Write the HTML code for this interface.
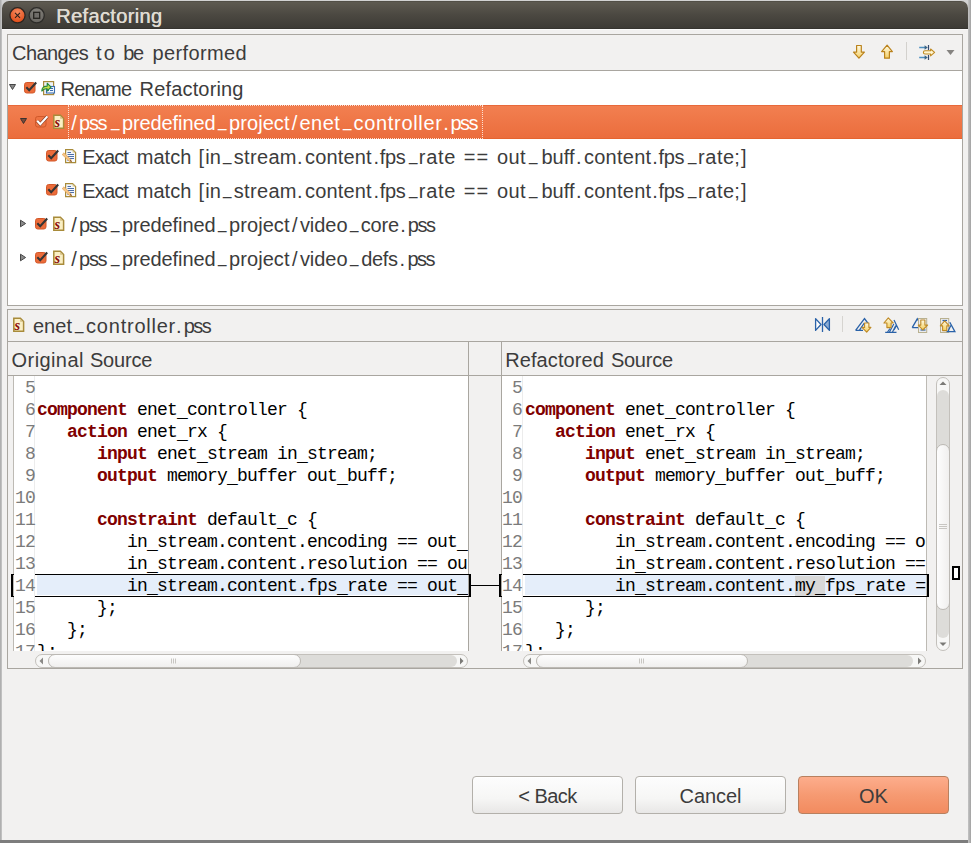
<!DOCTYPE html>
<html><head><meta charset="utf-8">
<style>
*{margin:0;padding:0;box-sizing:border-box}
html,body{width:971px;height:843px;overflow:hidden;position:relative}
body{font-family:"Liberation Sans",sans-serif;color:#3c3c3c;background:#d6d6d6}
.a{position:absolute}
svg{position:absolute;overflow:visible}
.ui{position:absolute;font-size:20px;line-height:22px;white-space:nowrap;color:#3c3c3c}
.ln,.cd{position:absolute;font-family:"Liberation Mono",monospace;font-size:18px;letter-spacing:-0.8px;line-height:22px;white-space:pre}
.ln{color:#7b7b7b;text-align:right}
.cd{color:#000}
.cd b{color:#7f0000;font-weight:bold}
.cd i{font-style:normal;background:#d8d8d8}
.btn{position:absolute;border:1px solid #b3b0aa;border-radius:4px;background:linear-gradient(#fdfdfd,#f6f6f5 60%,#e8e7e6);box-shadow:inset 0 1px 0 #fff}
.btn span{position:absolute;left:0;right:0;top:8px;text-align:center;font-size:20px;line-height:22px;color:#3c3c3c}
.hs{position:absolute;height:14px;border:1px solid #c9c6c1;border-radius:7px;background:#e3e2e0}
.thumb{position:absolute;border:1px solid #c2bfba;background:linear-gradient(#fefefe,#f2f1f0 55%,#e6e5e3)}
.ui u{text-decoration:none;position:relative;top:-4px;display:inline-block;transform:scaleX(0.76);transform-origin:0 0}
.cd u{text-decoration:none;position:relative;top:2px}

</style></head><body>
<!-- backdrop -->
<div class="a" style="left:0;top:0;width:971px;height:843px;background:#d2d2d2"></div>
<div class="a" style="left:0;top:0;width:2px;height:843px;background:linear-gradient(90deg,#a8a8a8,#c8c8c8)"></div>
<div class="a" style="left:0;top:840px;width:971px;height:3px;background:#7d7d7d"></div>
<div class="a" style="left:968px;top:0;width:3px;height:843px;background:linear-gradient(90deg,#c4c4c4,#a2a2a2)"></div>

<!-- window -->
<div class="a" style="left:2px;top:1px;width:966px;height:839px;background:#f2f1f0;border-radius:7px 7px 0 0;overflow:hidden">
  <div class="a" style="left:0;top:0;width:966px;height:28px;background:linear-gradient(#4d4a42 0,#5d5950 1.5px,#4b4841 50%,#3d3b36 27px,#2e2d29 28px)"></div>
  <div class="a" style="left:0;top:28px;width:966px;height:1px;background:#fbfbfb"></div>
</div>
<!-- title buttons -->
<svg style="left:0;top:0" width="60" height="30">
  <defs>
    <radialGradient id="cg" cx="50%" cy="30%" r="70%"><stop offset="0" stop-color="#f68a5f"/><stop offset="1" stop-color="#df4a15"/></radialGradient>
    <radialGradient id="mg" cx="50%" cy="30%" r="70%"><stop offset="0" stop-color="#87857f"/><stop offset="1" stop-color="#66645f"/></radialGradient>
  </defs>
  <circle cx="17.5" cy="15.3" r="7.6" fill="url(#cg)" stroke="#2b2521" stroke-width="1.3"/>
  <path d="M15 12.8 L20 17.8 M20 12.8 L15 17.8" stroke="#2e211b" stroke-width="1.1"/>
  <circle cx="36.7" cy="15.3" r="7.6" fill="url(#mg)" stroke="#2d2c29" stroke-width="1.3"/>
  <rect x="33.7" y="12.3" width="6" height="6" fill="#6f6d69" stroke="#25241f" stroke-width="1.3"/>
</svg>
<div class="ui" style="left:56px;top:5px;color:#dfdbd2;font-size:20px;letter-spacing:0.35px;text-shadow:0.6px 0 0 #dfdbd2">Refactoring</div>

<!-- ================= changes group ================= -->
<div class="a" style="left:7px;top:34px;width:956px;height:272px;background:#fff;border:1px solid #a9a6a0"></div>
<div class="a" style="left:8px;top:35px;width:954px;height:36px;background:#f2f1f0;border-bottom:1px solid #a9a6a0"></div>

<!-- toolbar icons -->
<svg style="left:850px;top:42px" width="110" height="22">
  <defs>
    <linearGradient id="ag" x1="0" y1="0" x2="0" y2="1"><stop offset="0" stop-color="#fffbe6"/><stop offset="1" stop-color="#f5d066"/></linearGradient>
    <linearGradient id="ag2" x1="0" y1="0" x2="1" y2="0"><stop offset="0" stop-color="#fff6c8"/><stop offset="1" stop-color="#f2c23a"/></linearGradient>
  </defs>
  <!-- down arrow: x 853-865 y45-59 -->
  <path d="M6.6 3.5 H11.3 V10.1 H14.4 L8.95 16.2 L3.5 10.1 H6.6 Z" fill="url(#ag)" stroke="#ba821c" stroke-width="1.2" stroke-linejoin="round"/>
  <!-- up arrow: x 881-893 y44-59 -->
  <path d="M34.6 16.2 H39.4 V9.6 H42.4 L37.1 3.2 L31.6 9.6 H34.6 Z" fill="url(#ag)" stroke="#ba821c" stroke-width="1.2" stroke-linejoin="round"/>
  <rect x="56" y="0" width="1" height="18" fill="#d3d1cd"/>
  <!-- layout icon x919-935 -->
  <path d="M69.2 5.5 H75.5 M69.2 15.5 H75.5" stroke="#4d8fc0" stroke-width="1.3"/>
  <path d="M74.6 3.2 L77.8 5.5 L74.6 7.8 Z M74.6 13.2 L77.8 15.5 L74.6 17.8 Z" fill="#3d6585"/>
  <path d="M78.5 3 V8 M78.5 13 V18" stroke="#35496e" stroke-width="1.2"/>
  <path d="M75 8.8 H80.6 V7 L84.6 10.4 L80.6 13.8 V12 H75 A1.6 1.6 0 0 1 75 8.8 Z" fill="#fff6d2" stroke="#c08a22" stroke-width="1.1" stroke-linejoin="round"/>
  <path d="M96.5 8 H104.5 L100.5 13 Z" fill="#858380"/>
</svg>

<!-- tree -->
<div class="a" style="left:8px;top:105px;width:954px;height:34px;background:linear-gradient(#f27f50,#eb6d3d);border-top:1px solid #e8693a;border-bottom:1px solid #e5642f"></div>
<div class="a" style="left:68px;top:105px;width:415px;height:34px;border:1px dotted #fde0d2"></div>

<svg style="left:0;top:0" width="80" height="300">
  <defs>
    <g id="chk">
      <rect x="0.5" y="0.5" width="10.5" height="10.5" rx="2.2" fill="#ec6c3a" stroke="#d35728" stroke-width="1"/>
      <path d="M2.3 5.2 L5.2 8.2 L12.2 0.5" fill="none" stroke="#353535" stroke-width="2.1"/>
    </g>
    <g id="chkw">
      <rect x="0.5" y="0.5" width="10.5" height="10.5" rx="2.2" fill="#ee7342" stroke="#d0582a" stroke-width="1"/>
      <path d="M2.2 4.8 L5.3 8.2 L12.4 0.4" fill="none" stroke="#6a3422" stroke-width="3.2" stroke-opacity="0.8"/><path d="M2.2 4.8 L5.3 8.2 L12.4 0.4" fill="none" stroke="#ffffff" stroke-width="2.1"/>
    </g>
    <g id="pss">
      <path d="M0.8 0.8 H7.4 L10.6 4 V13.8 H0.8 Z" fill="#fbefc4" stroke="#a88b3a" stroke-width="1.5"/>
      <path d="M7.2 1.2 V4.2 H10.2 Z" fill="#d3bf84"/>
      <text x="1.6" y="12.2" font-family="Liberation Serif" font-style="italic" font-weight="bold" font-size="14.5" fill="#8a0c0c">s</text>
    </g>
    <g id="match">
      <path d="M3.6 0.6 H10.6 L13.6 3.6 V13.6 H3.6 Z" fill="#f4f8fd" stroke="#a88b3a" stroke-width="1.2"/>
      <path d="M10.6 0.8 V3.6 H13.4 Z" fill="#d8c68e"/>
      <path d="M5.5 3.5 H9 M5.5 5.5 H12 M5.5 7.5 H12 M5.5 9.5 H12 M5.5 11.5 H9" stroke="#4e6fa8" stroke-width="1"/>
      <path d="M0.2 5.6 L2 3.8 L9 10.8 L9.6 12.8 L7.4 12.4 Z" fill="#f6c483" stroke="#e0a35a" stroke-width="0.7"/>
      <path d="M8 11.4 L9.6 12.8" stroke="#5a3a20" stroke-width="1"/>
    </g>
    <path id="tri" d="M0 0 H7 L3.5 6 Z"/>
  </defs>
  <!-- row 1 -->
  <path d="M9.5 84.5 H15.5 L12.5 89.5 Z" fill="#8a8a8a" stroke="#474747" stroke-width="1" stroke-linejoin="round"/>
  <use href="#chk" x="24" y="82"/>
  <g transform="translate(41,81)">
    <rect x="2.6" y="0.6" width="10" height="13" fill="#eef3fa" stroke="#a88a3c" stroke-width="1.2"/>
    <rect x="5.5" y="5.5" width="8" height="6.5" fill="#f4f8fd" stroke="#3b6db0" stroke-width="1.1"/>
    <path d="M9 7.5 H12 M9 9.5 H12 M7 9.5 H8" stroke="#3b6db0" stroke-width="1"/>
    <path transform="translate(0,-0.8)" d="M0.8 10.8 C0.8 7.6 2.6 5.9 6.2 5.9 V3 L10 6.9 L6.2 10.8 V8.6 C4 8.4 2.3 9.2 0.8 10.8 Z" fill="#c4dd4c" stroke="#25893a" stroke-width="1.1" stroke-linejoin="round"/>
  </g>
  <!-- row 2 selected -->
  <path d="M20.5 118.5 H26.5 L23.5 123.5 Z" fill="#7a4a38" stroke="#3a3230" stroke-width="1" stroke-linejoin="round"/>
  <use href="#chkw" x="35" y="116"/>
  <use href="#pss" x="53" y="114.5"/>
  <!-- row 3,4 -->
  <use href="#chk" x="46" y="150"/>
  <use href="#match" x="62" y="149"/>
  <use href="#chk" x="46" y="184"/>
  <use href="#match" x="62" y="183"/>
  <!-- row 5,6 -->
  <path d="M20.5 220.2 L25.6 223.5 L20.5 226.8 Z" fill="#8a8a8a" stroke="#474747" stroke-width="1" stroke-linejoin="round"/>
  <use href="#chk" x="35" y="218"/>
  <use href="#pss" x="53" y="216.5"/>
  <path d="M20.5 254.2 L25.6 257.5 L20.5 260.8 Z" fill="#8a8a8a" stroke="#474747" stroke-width="1" stroke-linejoin="round"/>
  <use href="#chk" x="35" y="252"/>
  <use href="#pss" x="53" y="250.5"/>
</svg>


<!-- ================= compare group ================= -->
<div class="a" style="left:7px;top:309px;width:956px;height:360px;background:#f2f1f0;border:1px solid #a9a6a0"></div>
<svg style="left:0;top:0" width="60" height="340">
  <use href="#pss" x="13" y="317.5"/>
</svg>

<svg style="left:800px;top:310px" width="170" height="30">
  <defs>
    <linearGradient id="ag3" x1="0" y1="0" x2="0" y2="1"><stop offset="0" stop-color="#fffbe6"/><stop offset="1" stop-color="#f3cd5a"/></linearGradient>
  </defs>
  <!-- mirror -->
  <path d="M15.6 8.6 L21 14.5 L15.6 20.4 Z" fill="#fbfcfe" stroke="#2a62a8" stroke-width="1.3" stroke-linejoin="round"/>
  <path d="M22.5 7 V22" stroke="#2a62a8" stroke-width="1.3"/>
  <path d="M29.4 8.6 L24 14.5 L29.4 20.4 Z" fill="#8dadd4" stroke="#2a62a8" stroke-width="1.3" stroke-linejoin="round"/>
  <rect x="42" y="6" width="1" height="16" fill="#d6d4d0"/>
  <!-- icon 3 -->
  <path d="M55.6 20.4 L64.5 8.6 L68.5 14 M55.6 20.4 H63 M59.5 20.2 L64.3 13" fill="none" stroke="#2a62a8" stroke-width="1.3"/>
  <path d="M64.6 13 H68.9 V17.4 H70.9 L66.7 22.2 L62 17.4 H64.6 Z" fill="url(#ag3)" stroke="#bf8a26" stroke-width="1.1" stroke-linejoin="round"/>
  <!-- icon 4 -->
  <path d="M94 10 L98.7 19.8 M85.2 22.3 H96.5 M89.5 22 L93.8 14 M92.5 22 L95.8 15.5 M87.5 22 L90 18.5 M94 20 L96.3 16" fill="none" stroke="#2a62a8" stroke-width="1.2"/>
  <path d="M86.9 17.6 H91.1 V13 H93.2 L88.3 7.9 L83.9 13 H86.9 Z" fill="url(#ag3)" stroke="#bf8a26" stroke-width="1.1" stroke-linejoin="round"/>
  <!-- icon 5 -->
  <path d="M112.2 17.6 L117.3 8.8 L119 11.5 M112.2 17.6 H119" fill="none" stroke="#2a62a8" stroke-width="1.3"/>
  <rect x="118.5" y="8.5" width="8.2" height="14" fill="#eaebee" stroke="#b9b190" stroke-width="1"/>
  <path d="M120.5 20 H125.5" stroke="#2a62a8" stroke-width="1.2"/>
  <path d="M120.8 10 H124.9 V15.1 H127.6 L122.8 20 L118.3 15.1 H120.8 Z" fill="url(#ag3)" stroke="#bf8a26" stroke-width="1.1" stroke-linejoin="round"/>
  <!-- icon 6 -->
  <rect x="140.5" y="8.5" width="8.2" height="14" fill="#eaebee" stroke="#b9b190" stroke-width="1"/>
  <path d="M142.5 10.5 H147" stroke="#2a62a8" stroke-width="1.2"/>
  <path d="M149.8 12.2 L154.9 21.6 H146.5 M148 21.2 L150.8 15.5" fill="none" stroke="#2a62a8" stroke-width="1.3"/>
  <path d="M142.6 20.6 H146.8 V15.9 H149.2 L144.7 10.9 L140.3 15.9 H142.6 Z" fill="url(#ag3)" stroke="#bf8a26" stroke-width="1.1" stroke-linejoin="round"/>
</svg>

<div class="a" style="left:8px;top:341px;width:954px;height:1px;background:#a9a6a0"></div>
<div class="a" style="left:8px;top:375px;width:954px;height:1px;background:#a9a6a0"></div>
<div class="a" style="left:468px;top:342px;width:1px;height:309px;background:#a9a6a0"></div>
<div class="a" style="left:501px;top:342px;width:1px;height:309px;background:#a9a6a0"></div>

<!-- left code pane -->
<div class="a" style="left:13px;top:376px;width:455px;height:275px;background:#fff;border-left:1px solid #bdbab4;overflow:hidden">
  <div class="a" style="left:20px;top:0;width:1px;height:275px;background:#ececec"></div>
  <div class="a" style="left:23px;top:199px;width:440px;height:20px;background:#e5eefa"></div>
  <div class="ln" style="left:0;top:1px;width:21px">5
6
7
8
9
10
11
12
13
14
15
16
17</div>
  <div class="cd" style="left:23px;top:1px">
<b>component</b> enet<u>_</u>controller {
   <b>action</b> enet<u>_</u>rx {
      <b>input</b> enet<u>_</u>stream in<u>_</u>stream;
      <b>output</b> memory<u>_</u>buffer out<u>_</u>buff;

      <b>constraint</b> default<u>_</u>c {
         in<u>_</u>stream.content.encoding == out<u>_</u>buff.content.encoding;
         in<u>_</u>stream.content.resolution == out<u>_</u>buff.content.resolution;
         in<u>_</u>stream.content.fps<u>_</u>rate == out<u>_</u>buff.content.fps<u>_</u>rate;
      };
   };
};</div>
</div>
<!-- left frame -->
<div class="a" style="left:35px;top:574px;width:436px;height:23px;border:1px solid #000;border-left:none;border-right:2px solid #000"></div>
<div class="a" style="left:11px;top:574px;width:3px;height:23px;border:1px solid #000;border-right:none;border-left:2px solid #000"></div>
<div class="a" style="left:471px;top:585px;width:30px;height:1px;background:#000"></div>
<div class="a" style="left:499px;top:574px;width:3px;height:23px;border:1px solid #000;border-right:none;border-left:2px solid #000"></div>

<!-- right code pane -->
<div class="a" style="left:502px;top:376px;width:424px;height:275px;background:#fff;overflow:hidden">
  <div class="a" style="left:20px;top:0;width:1px;height:275px;background:#ececec"></div>
  <div class="a" style="left:23px;top:199px;width:402px;height:20px;background:#e5eefa"></div>
  <div class="ln" style="left:-1px;top:1px;width:21px">5
6
7
8
9
10
11
12
13
14
15
16
17</div>
  <div class="cd" style="left:23px;top:1px">
<b>component</b> enet<u>_</u>controller {
   <b>action</b> enet<u>_</u>rx {
      <b>input</b> enet<u>_</u>stream in<u>_</u>stream;
      <b>output</b> memory<u>_</u>buffer out<u>_</u>buff;

      <b>constraint</b> default<u>_</u>c {
         in<u>_</u>stream.content.encoding == out<u>_</u>buff.content.encoding;
         in<u>_</u>stream.content.resolution == out<u>_</u>buff.content.resolution;
         in<u>_</u>stream.content.<i>my<u>_</u></i>fps<u>_</u>rate == out<u>_</u>buff.content.fps<u>_</u>rate;
      };
   };
};</div>
</div>
<div class="a" style="left:926px;top:376px;width:1px;height:275px;background:#bdbab4"></div>
<div class="a" style="left:523px;top:574px;width:406px;height:23px;border:1px solid #000;border-left:none;border-right:2px solid #000"></div>

<!-- right vertical scrollbar -->
<div class="a" style="left:936px;top:377px;width:14px;height:274px;border:1px solid #c3c0bb;border-radius:7px;background:#f7f7f6"></div>
<div class="a" style="left:937px;top:390px;width:12px;height:248px;border-radius:6px;background:#dddcd9"></div>
<div class="a" style="left:936px;top:444px;width:14px;height:166px;border:1px solid #bcb9b4;border-radius:7px;background:linear-gradient(90deg,#fdfdfd,#f0efee)"></div>
<div class="a" style="left:939px;top:524px;width:8px;height:5px;border-top:1px solid #c8c6c2;border-bottom:1px solid #c8c6c2"></div>
<div class="a" style="left:939px;top:526px;width:8px;height:1px;background:#c8c6c2"></div>
<svg style="left:936px;top:377px" width="14" height="274">
  <path d="M3.5 8 L7 4.5 L10.5 8 Z" fill="#7b7a77"/>
  <path d="M3.5 265.5 L7 269 L10.5 265.5 Z" fill="#7b7a77"/>
</svg>
<!-- overview marker -->
<div class="a" style="left:952px;top:566px;width:8px;height:14px;border:2px solid #000;background:#fff"></div>

<!-- left horizontal scrollbar -->
<div class="a" style="left:35px;top:654px;width:433px;height:14px;border:1px solid #c3c0bb;border-radius:7px;background:#f7f7f6"></div>
<div class="a" style="left:48px;top:655px;width:409px;height:12px;border-radius:6px;background:#dddcd9"></div>
<div class="a" style="left:48px;top:654px;width:253px;height:14px;border:1px solid #bcb9b4;border-radius:7px;background:linear-gradient(#fdfdfd,#f0efee)"></div>
<svg style="left:35px;top:654px" width="433" height="14">
  <path d="M8 3.5 L4.5 7 L8 10.5 Z" fill="#8a8986"/>
  <path d="M425 3.5 L428.5 7 L425 10.5 Z" fill="#7b7a77"/>
  <path d="M136.5 4.5 V9.5 M138.5 4.5 V9.5 M140.5 4.5 V9.5" stroke="#c8c6c2" stroke-width="1"/>
</svg>
<!-- right horizontal scrollbar -->
<div class="a" style="left:523px;top:654px;width:403px;height:14px;border:1px solid #c3c0bb;border-radius:7px;background:#f7f7f6"></div>
<div class="a" style="left:536px;top:655px;width:377px;height:12px;border-radius:6px;background:#dddcd9"></div>
<div class="a" style="left:536px;top:654px;width:212px;height:14px;border:1px solid #bcb9b4;border-radius:7px;background:linear-gradient(#fdfdfd,#f0efee)"></div>
<svg style="left:523px;top:654px" width="403" height="14">
  <path d="M8 3.5 L4.5 7 L8 10.5 Z" fill="#8a8986"/>
  <path d="M395 3.5 L398.5 7 L395 10.5 Z" fill="#7b7a77"/>
  <path d="M116.5 4.5 V9.5 M118.5 4.5 V9.5 M120.5 4.5 V9.5" stroke="#c8c6c2" stroke-width="1"/>
</svg>

<div class="ui" style="left:12.10px;top:42px;letter-spacing:-0.58px">Changes</div>
<div class="ui" style="left:96.10px;top:42px;letter-spacing:2.00px">to</div>
<div class="ui" style="left:123.20px;top:42px;letter-spacing:-1.40px">be</div>
<div class="ui" style="left:152.50px;top:42px;letter-spacing:0.36px">performed</div>
<div class="ui" style="left:60.50px;top:78px;letter-spacing:-0.80px">Rename</div>
<div class="ui" style="left:139.60px;top:78px;letter-spacing:0.16px">Refactoring</div>
<div class="ui" style="left:71.30px;top:112px;color:#fff">/</div>
<div class="ui" style="left:79.10px;top:112px;letter-spacing:-1.30px;color:#fff">pss</div>
<div class="ui" style="left:110.60px;top:112px;color:#fff"><u>_</u></div>
<div class="ui" style="left:122.00px;top:112px;letter-spacing:-0.11px;color:#fff">predefined</div>
<div class="ui" style="left:218.30px;top:112px;color:#fff"><u>_</u></div>
<div class="ui" style="left:229.00px;top:112px;letter-spacing:0.08px;color:#fff">project</div>
<div class="ui" style="left:291.70px;top:112px;color:#fff">/</div>
<div class="ui" style="left:299.50px;top:112px;letter-spacing:0.47px;color:#fff">enet</div>
<div class="ui" style="left:342.50px;top:112px;color:#fff"><u>_</u></div>
<div class="ui" style="left:353.50px;top:112px;letter-spacing:0.69px;color:#fff">controller</div>
<div class="ui" style="left:443.20px;top:112px;color:#fff">.</div>
<div class="ui" style="left:450.40px;top:112px;letter-spacing:-1.50px;color:#fff">pss</div>
<div class="ui" style="left:82.30px;top:146px;letter-spacing:-0.87px">Exact</div>
<div class="ui" style="left:136.70px;top:146px;letter-spacing:0.05px">match</div>
<div class="ui" style="left:198.50px;top:146px">[</div>
<div class="ui" style="left:205.30px;top:146px;letter-spacing:-0.10px">in</div>
<div class="ui" style="left:223.10px;top:146px"><u>_</u></div>
<div class="ui" style="left:233.80px;top:146px;letter-spacing:0.32px">stream</div>
<div class="ui" style="left:297.00px;top:146px">.</div>
<div class="ui" style="left:305.10px;top:146px;letter-spacing:0.13px">content</div>
<div class="ui" style="left:373.40px;top:146px">.</div>
<div class="ui" style="left:379.70px;top:146px;letter-spacing:-0.25px">fps</div>
<div class="ui" style="left:408.80px;top:146px"><u>_</u></div>
<div class="ui" style="left:418.80px;top:146px;letter-spacing:0.67px">rate</div>
<div class="ui" style="left:463.80px;top:146px;letter-spacing:1.00px">==</div>
<div class="ui" style="left:496.90px;top:146px;letter-spacing:0.40px">out</div>
<div class="ui" style="left:528.80px;top:146px"><u>_</u></div>
<div class="ui" style="left:541.40px;top:146px;letter-spacing:0.07px">buff</div>
<div class="ui" style="left:575.90px;top:146px">.</div>
<div class="ui" style="left:583.90px;top:146px;letter-spacing:0.27px">content</div>
<div class="ui" style="left:652.20px;top:146px">.</div>
<div class="ui" style="left:658.50px;top:146px;letter-spacing:-0.30px">fps</div>
<div class="ui" style="left:688.00px;top:146px"><u>_</u></div>
<div class="ui" style="left:698.00px;top:146px;letter-spacing:0.57px">rate</div>
<div class="ui" style="left:734.30px;top:146px">;</div>
<div class="ui" style="left:741.00px;top:146px">]</div>
<div class="ui" style="left:82.30px;top:180px;letter-spacing:-0.87px">Exact</div>
<div class="ui" style="left:136.70px;top:180px;letter-spacing:0.05px">match</div>
<div class="ui" style="left:198.50px;top:180px">[</div>
<div class="ui" style="left:205.30px;top:180px;letter-spacing:-0.10px">in</div>
<div class="ui" style="left:223.10px;top:180px"><u>_</u></div>
<div class="ui" style="left:233.80px;top:180px;letter-spacing:0.32px">stream</div>
<div class="ui" style="left:297.00px;top:180px">.</div>
<div class="ui" style="left:305.10px;top:180px;letter-spacing:0.13px">content</div>
<div class="ui" style="left:373.40px;top:180px">.</div>
<div class="ui" style="left:379.70px;top:180px;letter-spacing:-0.25px">fps</div>
<div class="ui" style="left:408.80px;top:180px"><u>_</u></div>
<div class="ui" style="left:418.80px;top:180px;letter-spacing:0.67px">rate</div>
<div class="ui" style="left:463.80px;top:180px;letter-spacing:1.00px">==</div>
<div class="ui" style="left:496.90px;top:180px;letter-spacing:0.40px">out</div>
<div class="ui" style="left:528.80px;top:180px"><u>_</u></div>
<div class="ui" style="left:541.40px;top:180px;letter-spacing:0.07px">buff</div>
<div class="ui" style="left:575.90px;top:180px">.</div>
<div class="ui" style="left:583.90px;top:180px;letter-spacing:0.27px">content</div>
<div class="ui" style="left:652.20px;top:180px">.</div>
<div class="ui" style="left:658.50px;top:180px;letter-spacing:-0.30px">fps</div>
<div class="ui" style="left:688.00px;top:180px"><u>_</u></div>
<div class="ui" style="left:698.00px;top:180px;letter-spacing:0.57px">rate</div>
<div class="ui" style="left:734.30px;top:180px">;</div>
<div class="ui" style="left:741.00px;top:180px">]</div>
<div class="ui" style="left:71.30px;top:214px">/</div>
<div class="ui" style="left:79.10px;top:214px;letter-spacing:-1.30px">pss</div>
<div class="ui" style="left:110.60px;top:214px"><u>_</u></div>
<div class="ui" style="left:122.00px;top:214px;letter-spacing:-0.11px">predefined</div>
<div class="ui" style="left:218.30px;top:214px"><u>_</u></div>
<div class="ui" style="left:229.00px;top:214px;letter-spacing:0.08px">project</div>
<div class="ui" style="left:292.00px;top:214px">/</div>
<div class="ui" style="left:299.90px;top:214px;letter-spacing:-0.05px">video</div>
<div class="ui" style="left:350.30px;top:214px"><u>_</u></div>
<div class="ui" style="left:360.80px;top:214px;letter-spacing:-0.23px">core</div>
<div class="ui" style="left:400.20px;top:214px">.</div>
<div class="ui" style="left:407.80px;top:214px;letter-spacing:-1.50px">pss</div>
<div class="ui" style="left:71.30px;top:248px">/</div>
<div class="ui" style="left:79.10px;top:248px;letter-spacing:-1.30px">pss</div>
<div class="ui" style="left:110.60px;top:248px"><u>_</u></div>
<div class="ui" style="left:122.00px;top:248px;letter-spacing:-0.11px">predefined</div>
<div class="ui" style="left:218.30px;top:248px"><u>_</u></div>
<div class="ui" style="left:229.00px;top:248px;letter-spacing:0.08px">project</div>
<div class="ui" style="left:292.00px;top:248px">/</div>
<div class="ui" style="left:299.90px;top:248px;letter-spacing:-0.05px">video</div>
<div class="ui" style="left:350.30px;top:248px"><u>_</u></div>
<div class="ui" style="left:361.20px;top:248px;letter-spacing:-0.30px">defs</div>
<div class="ui" style="left:399.40px;top:248px">.</div>
<div class="ui" style="left:407.40px;top:248px;letter-spacing:-1.50px">pss</div>
<div class="ui" style="left:32.90px;top:315px;letter-spacing:0.07px">enet</div>
<div class="ui" style="left:75.10px;top:315px"><u>_</u></div>
<div class="ui" style="left:86.10px;top:315px;letter-spacing:0.77px">controller</div>
<div class="ui" style="left:176.10px;top:315px">.</div>
<div class="ui" style="left:183.70px;top:315px;letter-spacing:-1.50px">pss</div>
<div class="ui" style="left:11.60px;top:349px;letter-spacing:0.41px">Original</div>
<div class="ui" style="left:89.90px;top:349px;letter-spacing:-0.18px">Source</div>
<div class="ui" style="left:505.20px;top:349px;letter-spacing:0.10px">Refactored</div>
<div class="ui" style="left:610.90px;top:349px;letter-spacing:-0.24px">Source</div>
<!-- buttons -->
<div class="btn" style="left:472px;top:776px;width:151px;height:38px"><span style="letter-spacing:-0.54px">&lt; Back</span></div>
<div class="btn" style="left:635px;top:776px;width:151px;height:38px"><span style="letter-spacing:-0.06px">Cancel</span></div>
<div class="btn" style="left:798px;top:776px;width:151px;height:38px;border-color:#b8805f;box-shadow:none;background:linear-gradient(#fdad8c,#f69a72 50%,#f28b5f)"><span>OK</span></div>

</body></html>
